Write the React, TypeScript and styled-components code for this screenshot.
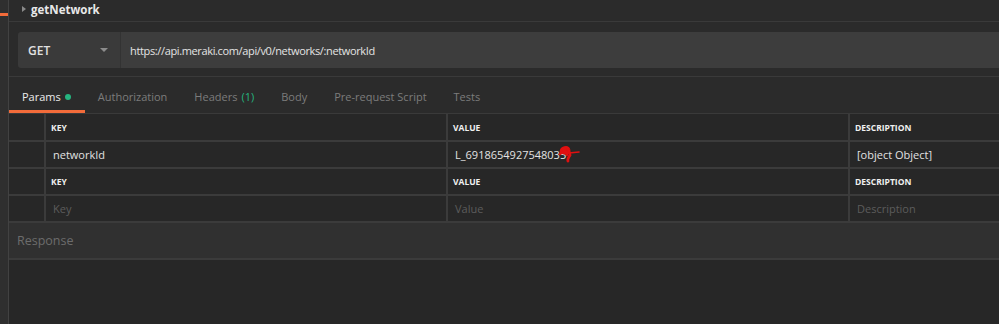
import { Fragment } from "react";
import styled, { createGlobalStyle } from "styled-components";

const GlobalStyle = createGlobalStyle`
  html, body {
    margin: 0;
    padding: 0;
    background: #2b2b2b;
  }
  body {
    font-family: "Open Sans", "Liberation Sans", sans-serif;
  }
`;

interface IParam {
  key: string;
  value: string;
  description: string;
}

const params: IParam[] = [
  { key: "networkId", value: "L_6918654927548035", description: "[object Object]" },
];

const tabs = [
  { label: "Params", dot: true },
  { label: "Authorization" },
  { label: "Headers", count: "(1)" },
  { label: "Body" },
  { label: "Pre-request Script" },
  { label: "Tests" },
];

function Scribble() {
  // red pen mark over the value, drawn on top of the screenshot
  return (
    <ScribbleSvg width="24" height="20" viewBox="0 0 24 20">
      <path
        d="M3 8 C3 3, 10 2, 11 6 C12 9, 6 10, 5 8 C4 5, 9 4, 11 7 L12 11 C11 13, 9 15, 10 17"
        stroke="#e01010"
        strokeWidth="2.8"
        fill="none"
        strokeLinecap="round"
      />
      <path d="M6 4 L9 11 M2 10 L8 6 M4 5 L10 9" stroke="#e01010" strokeWidth="2.4" strokeLinecap="round" />
      <path d="M11 9 L21 8" stroke="#e01010" strokeWidth="1.6" strokeLinecap="round" />
    </ScribbleSvg>
  );
}

function App() {
  return (
    <>
      <GlobalStyle />
      <Page>
        <Sidebar>
          <OrangeMark />
        </Sidebar>
        <Main>
          <TitleBar>
            <Caret />
            <Title>getNetwork</Title>
          </TitleBar>
          <UrlRow>
            <UrlBar>
              <MethodBox>
                <span>GET</span>
                <DropCaret />
              </MethodBox>
              <UrlInput>https://api.meraki.com/api/v0/networks/:networkId</UrlInput>
            </UrlBar>
          </UrlRow>
          <TabsBar>
            {tabs.map((t, i) => (
              <Tab key={t.label} $active={i === 0}>
                {t.label}
                {t.count && <Count>{t.count}</Count>}
                {t.dot && <Dot />}
              </Tab>
            ))}
          </TabsBar>
          <Table>
            <Cell />
            <HeadCell>Key</HeadCell>
            <HeadCell>Value</HeadCell>
            <HeadCell>Description</HeadCell>
            {params.map((p) => (
              <Fragment key={p.key}>
                <Cell />
                <Cell>{p.key}</Cell>
                <Cell>
                  {p.value}
                  <Scribble />
                </Cell>
                <Cell>{p.description}</Cell>
              </Fragment>
            ))}
            <Cell />
            <HeadCell>Key</HeadCell>
            <HeadCell>Value</HeadCell>
            <HeadCell>Description</HeadCell>
            <Cell />
            <Cell $placeholder>Key</Cell>
            <Cell $placeholder>Value</Cell>
            <Cell $placeholder>Description</Cell>
          </Table>
          <ResponseBar>Response</ResponseBar>
          <ResponseBody />
        </Main>
      </Page>
    </>
  );
}

const Page = styled.div`
  display: flex;
  width: 999px;
  height: 324px;
  overflow: hidden;
  background: #2b2b2b;
`;

const Sidebar = styled.div`
  width: 8px;
  flex-shrink: 0;
  background: #2f2f2f;
  border-right: 1px solid #424242;
`;

const OrangeMark = styled.div`
  margin-top: 13px;
  height: 3px;
  background: #f26b3a;
`;

const Main = styled.div`
  flex: 1;
  display: flex;
  flex-direction: column;
  min-width: 0;
`;

const TitleBar = styled.div`
  display: flex;
  align-items: center;
  padding-left: 13px;
  padding-bottom: 3px;
  box-sizing: border-box;
  border-bottom: 1px solid #3a3a3a;
  height: 22px;
`;

const Caret = styled.span`
  width: 0;
  height: 0;
  border-top: 3.5px solid transparent;
  border-bottom: 3.5px solid transparent;
  border-left: 4px solid #8a8a8a;
  margin-right: 5px;
`;

const Title = styled.span`
  font-size: 11.5px;
  font-weight: 700;
  color: #e8e8e8;
`;

const UrlRow = styled.div`
  padding: 10px 0 8px 9px;
  border-bottom: 1px solid #3a3a3a;
`;

const UrlBar = styled.div`
  display: flex;
  height: 36px;
  border-radius: 3px 0 0 3px;
  overflow: hidden;
`;

const MethodBox = styled.div`
  width: 103px;
  display: flex;
  align-items: center;
  justify-content: space-between;
  padding: 0 12px 0 10px;
  box-sizing: border-box;
  background: #3a3a3a;
  border-right: 1px solid #333333;
  font-size: 12px;
  font-weight: 600;
  color: #e0e0e0;
`;

const DropCaret = styled.span`
  width: 0;
  height: 0;
  border-left: 4px solid transparent;
  border-right: 4px solid transparent;
  border-top: 4px solid #8c8c8c;
`;

const UrlInput = styled.div`
  flex: 1;
  display: flex;
  align-items: center;
  padding-left: 9px;
  background: #3d3d3d;
  font-size: 11px;
  letter-spacing: -0.36px;
  color: #e4e4e4;
  white-space: nowrap;
`;

const TabsBar = styled.div`
  display: flex;
  height: 36px;
  border-bottom: 1px solid #3a3a3a;
`;

const Tab = styled.div<{ $active?: boolean }>`
  display: flex;
  align-items: center;
  padding: 6px 14px 0 13px;
  box-sizing: border-box;
  font-size: 11px;
  color: ${(p) => (p.$active ? "#ececec" : "#7c7c7c")};
  border-bottom: 3px solid ${(p) => (p.$active ? "#f26b3a" : "transparent")};
  white-space: nowrap;
`;

const Count = styled.span`
  color: #26b47f;
  margin-left: 4px;
`;

const Dot = styled.span`
  width: 6px;
  height: 6px;
  border-radius: 50%;
  background: #26b47f;
  margin-left: 4px;
`;

const Table = styled.div`
  display: grid;
  grid-template-columns: 35px 400px 400px 1fr;
  grid-template-rows: 26px 25px 25px 25px;
  gap: 2px;
  padding-bottom: 2px;
  background: #3b3b3b;
`;

const Cell = styled.div<{ $placeholder?: boolean }>`
  position: relative;
  display: flex;
  align-items: center;
  padding-left: 7px;
  background: #272727;
  font-size: 11px;
  color: ${(p) => (p.$placeholder ? "#5c5c5c" : "#e2e2e2")};
  white-space: nowrap;
  overflow: hidden;
`;

const HeadCell = styled(Cell)`
  padding-left: 5px;
  font-size: 8.5px;
  font-weight: 700;
  text-transform: uppercase;
  color: #f0f0f0;
`;

const ScribbleSvg = styled.svg`
  position: absolute;
  left: 110px;
  top: 2px;
`;

const ResponseBar = styled.div`
  height: 35px;
  display: flex;
  align-items: center;
  padding-left: 8px;
  background: #303030;
  border-bottom: 2px solid #3b3b3b;
  font-size: 12.5px;
  color: #6c6c6c;
`;

const ResponseBody = styled.div`
  flex: 1;
  background: #272727;
`;

export default App;
